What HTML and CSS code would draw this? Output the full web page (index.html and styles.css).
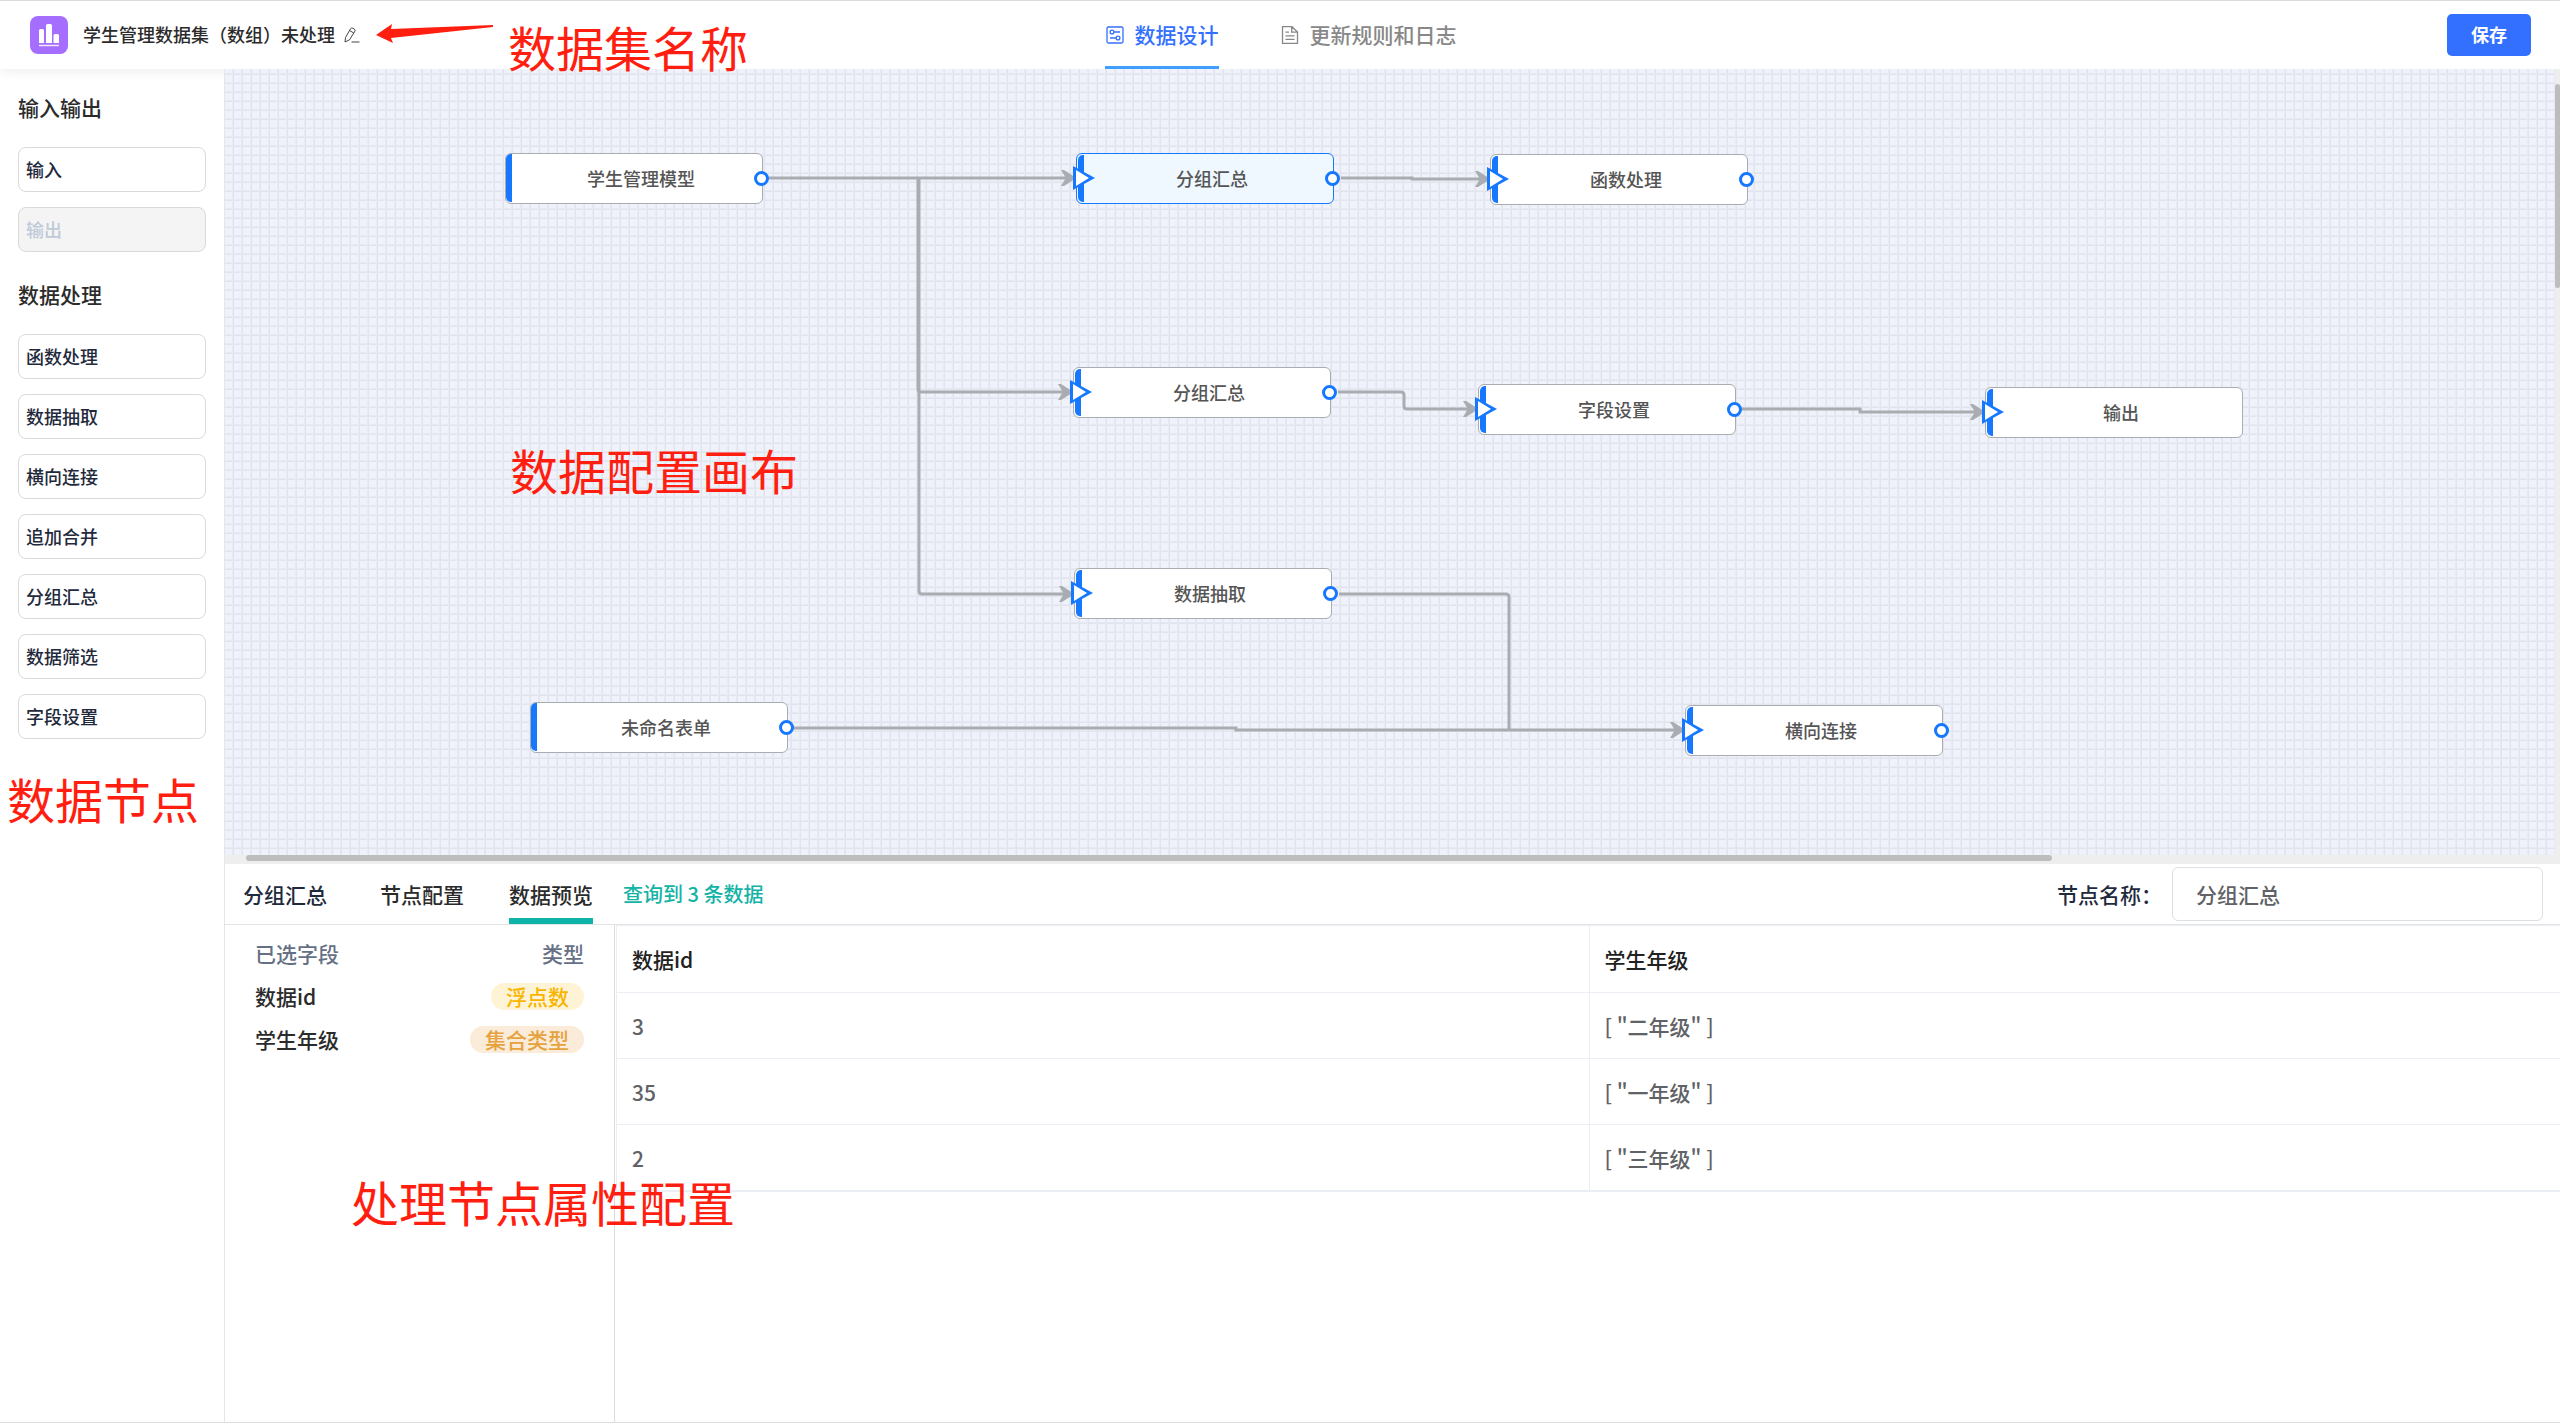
FILE: index.html
```html
<!DOCTYPE html>
<html lang="zh-CN">
<head>
<meta charset="utf-8">
<meta name="viewport" content="width=device-width, initial-scale=1">
<title>学生管理数据集（数组）未处理</title>
<link rel="stylesheet" href="styles.css">
</head>
<body>
<svg width="0" height="0" class="defs" aria-hidden="true">
  <defs>
    <marker id="arrow" markerUnits="userSpaceOnUse" markerWidth="16" markerHeight="16" refX="0" refY="8" viewBox="0 0 16 16" orient="auto">
      <path d="M1 0 L4 0 L15 7 V9 L4 16 L1 16 L5 9.500 H0 V6.500 H5 Z" fill="#a9acb0"/>
    </marker>
    <symbol id="port-in" viewBox="0 0 22 24">
      <path d="M0 0 L22 12 L0 24 Z" fill="#1677ff"/>
      <path d="M3 4 L16 12 L3 20 Z" fill="#fff"/>
    </symbol>
  </defs>
</svg>

<header class="header">
  <div class="header-title">
    <svg class="logo" viewBox="0 0 38 38" aria-hidden="true">
      <rect width="38" height="38" rx="8" fill="#a56eff"/>
      <path d="M9 27V14.500q0-1.500 1.500-1.500h2q1.500 0 1.500 1.500V27zM16 27V9.500q0-1.500 1.500-1.500h3q1.500 0 1.500 1.500V27zM23.500 27V19.500q0-1.500 1.500-1.500h2.500q1.500 0 1.500 1.500V27z" fill="#fff"/>
      <path d="M9 29.500h20" stroke="#fff" stroke-width="1.500" opacity=".85"/>
    </svg>
    <h1 class="dataset-name">学生管理数据集（数组）未处理</h1>
    <button class="icon-button" type="button" aria-label="编辑名称">
      <svg width="16" height="16" viewBox="0 0 16 16" fill="none" stroke="#444" stroke-linejoin="round" aria-hidden="true">
        <path d="M1 15 L1.500 10.500 L6.500 1.800 Q7.300 .5 8.800 1.200 L10.300 2.100 Q11.600 3 10.900 4.200 L5.500 12.800 Z M5.500 3.500 L9.800 6 M7.500 15 H15.500"/>
      </svg>
    </button>
  </div>
  <nav class="main-tabs">
    <a class="main-tab main-tab--active" href="#design">
      <svg width="20" height="20" viewBox="0 0 20 20" fill="none" stroke="currentColor" stroke-width="1.300" aria-hidden="true">
        <rect x="2" y="2" width="16" height="16" rx="1.500"/>
        <circle cx="7" cy="7" r="1.900"/><path d="M9 7h6M5 13h6"/><circle cx="13" cy="13" r="1.900"/>
      </svg>
      <span>数据设计</span>
    </a>
    <a class="main-tab" href="#rules">
      <svg width="20" height="20" viewBox="0 0 20 20" fill="none" stroke="currentColor" stroke-width="1.300" aria-hidden="true">
        <path d="M2.500 1.700H12L17.500 7V18.300H2.500ZM11.700 1.700V7.200H17.500M5.500 7.200H9M5.500 10.800H14.500M5.500 14.400H14.500"/>
      </svg>
      <span>更新规则和日志</span>
    </a>
  </nav>
  <div class="header-actions"><button class="save" type="button">保存</button></div>
</header>

<div class="body">
  <aside class="sidebar">
    <h2 class="group-title">输入输出</h2>
    <div class="group">
      <button class="item" type="button">输入</button>
      <button class="item" type="button" disabled>输出</button>
    </div>
    <h2 class="group-title">数据处理</h2>
    <div class="group">
      <button class="item" type="button">函数处理</button>
      <button class="item" type="button">数据抽取</button>
      <button class="item" type="button">横向连接</button>
      <button class="item" type="button">追加合并</button>
      <button class="item" type="button">分组汇总</button>
      <button class="item" type="button">数据筛选</button>
      <button class="item" type="button">字段设置</button>
    </div>
  </aside>

  <main class="main">
    <section class="stage">
      <div class="canvas">
        <svg class="edges" aria-hidden="true">
          <path d="M544 109H835" marker-end="url(#arrow)"/>
          <path d="M693 109V320Q693 323 696 323H832" marker-end="url(#arrow)"/>
          <path d="M694 109V522Q694 525 697 525H833" marker-end="url(#arrow)"/>
          <path d="M1116 109H1187V110H1249" marker-end="url(#arrow)"/>
          <path d="M1113 323H1176Q1179 323 1179 326V337Q1179 340 1182 340H1237" marker-end="url(#arrow)"/>
          <path d="M1517 340H1635V343H1744" marker-end="url(#arrow)"/>
          <path d="M1114 525H1281Q1284 525 1284 528V661"/>
          <path d="M568 659H1011V661H1444" marker-end="url(#arrow)"/>
        </svg>

        <div class="node node--source node--model"><span>学生管理模型</span><i class="port-out"></i></div>
        <div class="node node--selected node--group-a"><svg class="port-in"><use href="#port-in"/></svg><span>分组汇总</span><i class="port-out"></i></div>
        <div class="node node--function"><svg class="port-in"><use href="#port-in"/></svg><span>函数处理</span><i class="port-out"></i></div>
        <div class="node node--group-b"><svg class="port-in"><use href="#port-in"/></svg><span>分组汇总</span><i class="port-out"></i></div>
        <div class="node node--fields"><svg class="port-in"><use href="#port-in"/></svg><span>字段设置</span><i class="port-out"></i></div>
        <div class="node node--output"><svg class="port-in"><use href="#port-in"/></svg><span>输出</span></div>
        <div class="node node--extract"><svg class="port-in"><use href="#port-in"/></svg><span>数据抽取</span><i class="port-out"></i></div>
        <div class="node node--source node--form"><span>未命名表单</span><i class="port-out"></i></div>
        <div class="node node--join"><svg class="port-in"><use href="#port-in"/></svg><span>横向连接</span><i class="port-out"></i></div>
      </div>
      <div class="scroll-y"><div class="thumb-y"></div></div>
      <div class="scroll-x"><div class="thumb-x"></div></div>
    </section>

    <section class="panel">
      <div class="panel-bar">
        <strong class="panel-title">分组汇总</strong>
        <nav class="panel-tabs">
          <a class="panel-tab" href="#config">节点配置</a>
          <a class="panel-tab panel-tab--active" href="#preview">数据预览</a>
        </nav>
        <span class="result-count">查询到 3 条数据</span>
        <label class="name-label" for="node-name">节点名称：</label>
        <input class="name-input" id="node-name" type="text" value="分组汇总">
      </div>
      <div class="panel-body">
        <div class="field-list">
          <div class="field field--head"><span>已选字段</span><span>类型</span></div>
          <div class="field"><span>数据id</span><span class="tag tag--float">浮点数</span></div>
          <div class="field"><span>学生年级</span><span class="tag tag--set">集合类型</span></div>
        </div>
        <div class="preview">
          <table class="table">
            <thead><tr><th>数据id</th><th>学生年级</th></tr></thead>
            <tbody>
              <tr><td>3</td><td>[ "二年级" ]</td></tr>
              <tr><td>35</td><td>[ "一年级" ]</td></tr>
              <tr><td>2</td><td>[ "三年级" ]</td></tr>
            </tbody>
          </table>
        </div>
      </div>
    </section>
  </main>
</div>

<svg class="note-arrow" width="118" height="20" viewBox="0 0 118 20" aria-hidden="true">
  <path d="M0 11 L16 0 L15 5 L117 1 V3 L15 14 L17 19 Z" fill="#ff1e10"/>
</svg>
<p class="note note--name">数据集名称</p>
<p class="note note--canvas">数据配置画布</p>
<p class="note note--nodes">数据节点</p>
<p class="note note--config">处理节点属性配置</p>
</body>
</html>
```
FILE: styles.css
```css
* { box-sizing: border-box; }

body {
  margin: 0;
  min-height: 100vh;
  display: flex;
  flex-direction: column;
  position: relative;
  border-top: 1px solid #dcdcdc;
  border-bottom: 1px solid #dcdcdc;
  background: #fff;
  color: #2b2b2b;
  font-family: "Noto Sans CJK SC", "Noto Sans", sans-serif;
  font-size: 21px;
  font-weight: 500;
  line-height: 32px;
}

h1, h2, p { margin: 0; font: inherit; }
button, input { font: inherit; }
a { color: inherit; text-decoration: none; }
.defs { position: absolute; }

/* Header */
.header {
  display: grid;
  grid-template-columns: 1fr auto 1fr;
  height: 68px;
  padding: 0 29px 0 30px;
  background: #fff;
  box-shadow: 0 2px 12px rgba(0, 0, 0, 0.08);
}
.header-title { display: flex; align-items: center; }
.logo { width: 38px; height: 38px; margin-right: 15px; }
.dataset-name { padding-bottom: 2px; font-size: 18px; white-space: nowrap; }
.icon-button {
  display: flex;
  margin-left: 9px;
  padding: 0;
  border: 0;
  background: none;
}
.main-tabs { display: flex; gap: 61px; }
.main-tab {
  display: flex;
  align-items: center;
  gap: 10px;
  border-top: 3px solid transparent;
  border-bottom: 3px solid transparent;
  color: #888;
}
.main-tab span { padding-bottom: 2px; }
.main-tab--active { color: #3370ff; border-bottom-color: #409eff; }
.header-actions { display: flex; align-items: center; justify-content: flex-end; }
.save {
  width: 84px;
  height: 42px;
  padding: 0 0 2px;
  border: 0;
  border-radius: 5px;
  background: #3370ff;
  color: #fff;
  font-size: 18px;
  font-weight: 700;
}

/* Sidebar */
.body { flex: 1; display: flex; }
.sidebar {
  flex: 0 0 225px;
  padding: 22px 18px 0;
  border-right: 1px solid #e6e6e6;
}
.group-title { margin-bottom: 24px; }
.group { display: flex; flex-direction: column; gap: 15px; margin-bottom: 26px; }
.item {
  height: 45px;
  padding: 0 7px 1px;
  border: 1px solid #dadada;
  border-radius: 8px;
  background: #fff;
  color: #1f2a3d;
  font-size: 18px;
  text-align: left;
}
.item:disabled { background: #f4f4f4; color: #c0cad8; }

/* Canvas */
.main {
  flex: 1;
  min-width: 0;
  display: grid;
  grid-template-rows: 795fr 558fr;
}
.stage {
  position: relative;
  display: grid;
  grid-template: 1fr 9px / 1fr 5px;
}
.canvas {
  position: relative;
  overflow: hidden;
  background-color: #eff2fb;
  background-image:
    linear-gradient(90deg, transparent 7px, #e7eaf2 7px, #e7eaf2 8px, #e1e4ec 8px),
    linear-gradient(transparent 7px, #e7eaf2 7px, #e7eaf2 8px, #e1e4ec 8px);
  background-size: 9px 9px;
  background-position: 0 -3px;
}
.edges {
  position: absolute;
  inset: 0;
  width: 100%;
  height: 100%;
  fill: none;
  stroke: #a9acb0;
  stroke-width: 3px;
}
.node {
  position: absolute;
  width: 258px;
  height: 51px;
  display: flex;
  align-items: center;
  justify-content: center;
  padding: 0 0 2px 14px;
  border: 1px solid #a9acb0;
  border-radius: 6px;
  background: #fff;
  color: #555;
  font-size: 18px;
}
.node::before {
  content: "";
  position: absolute;
  left: 1px;
  top: 1px;
  bottom: 1px;
  width: 6px;
  border-radius: 5px 0 0 5px;
  background: #1677ff;
}
.node--source::before { left: 0; top: 0; }
.node--selected { border-color: #1677ff; background: #eff7ff; }
.port-in {
  position: absolute;
  left: -4px;
  top: 12px;
  width: 22px;
  height: 24px;
}
.port-out {
  position: absolute;
  right: -7px;
  top: 17px;
  width: 15px;
  height: 15px;
  border: 3px solid #1677ff;
  border-radius: 50%;
  background: #fff;
}
.node--model { left: 280px; top: 84px; }
.node--group-a { left: 851px; top: 84px; }
.node--function { left: 1265px; top: 85px; }
.node--group-b { left: 848px; top: 298px; }
.node--fields { left: 1253px; top: 315px; }
.node--output { left: 1760px; top: 318px; }
.node--extract { left: 849px; top: 499px; }
.node--form { left: 305px; top: 633px; }
.node--join { left: 1460px; top: 636px; }

.scroll-y { background: #eee; padding-top: 15px; }
.thumb-y { height: 204px; border-radius: 3px; background: #bdbdbd; }
.scroll-x { grid-column: 1 / 3; background: #eee; padding: 0 508px 0 21px; }
.thumb-x { height: 6px; border-radius: 3px; background: #bdbdbd; }

/* Properties panel */
.panel { display: flex; flex-direction: column; }
.panel-bar {
  display: flex;
  align-items: center;
  height: 61px;
  padding: 0 17px 0 18px;
  border-bottom: 1px solid #e4e4e4;
}
.panel-title { margin-right: 53px; font-weight: 500; color: #1f2a3d; }
.panel-tabs { display: flex; align-self: stretch; gap: 45px; }
.panel-tab {
  display: flex;
  align-items: center;
  border-top: 6px solid transparent;
  border-bottom: 6px solid transparent;
}
.panel-tab--active { border-bottom-color: #0fb3a7; }
.result-count { margin-left: 30px; font-size: 20px; color: #13b3a6; }
.name-label { margin-left: auto; margin-right: 10px; color: #1f2a3d; }
.name-input {
  width: 371px;
  height: 54px;
  padding: 0 23px;
  border: 1px solid #dcdfe6;
  border-radius: 6px;
  background: #fff;
  color: #606266;
}
.panel-body { flex: 1; display: flex; }
.field-list {
  flex: 0 0 390px;
  display: flex;
  flex-direction: column;
  gap: 11px;
  padding: 12px 30px 0;
  border-right: 1px solid #dcdcdc;
}
.field { display: flex; align-items: center; justify-content: space-between; }
.field--head { color: #667085; }
.tag { padding: 0 15px; border-radius: 14px; line-height: 27px; }
.tag--float { background: #fff3d6; color: #f7b500; }
.tag--set { background: #fbebd9; color: #e6a23c; }
.preview { flex: 1; padding-left: 1px; }
.table {
  width: 100%;
  table-layout: fixed;
  border-collapse: separate;
  border-spacing: 0;
  border-top: 1px solid #ebeef5;
  border-left: 1px solid #ebeef5;
  border-bottom: 1px solid #ebeef5;
}
.table th, .table td {
  height: 66px;
  padding: 0 15px;
  border-bottom: 1px solid #ebeef5;
  color: #606266;
  font-weight: 500;
  text-align: left;
}
.table th { height: 67px; color: #222; }
.table th + th, .table td + td { border-left: 1px solid #ebeef5; }

/* Annotations over the page */
.note {
  position: absolute;
  color: #ff1e10;
  font-size: 48px;
  font-weight: 400;
  line-height: 56px;
  white-space: nowrap;
}
.note-arrow { position: absolute; left: 376px; top: 23px; }
.note--name { left: 508px; top: 17px; }
.note--canvas { left: 510px; top: 440px; }
.note--nodes { left: 7px; top: 769px; }
.note--config { left: 351px; top: 1172px; }
```
